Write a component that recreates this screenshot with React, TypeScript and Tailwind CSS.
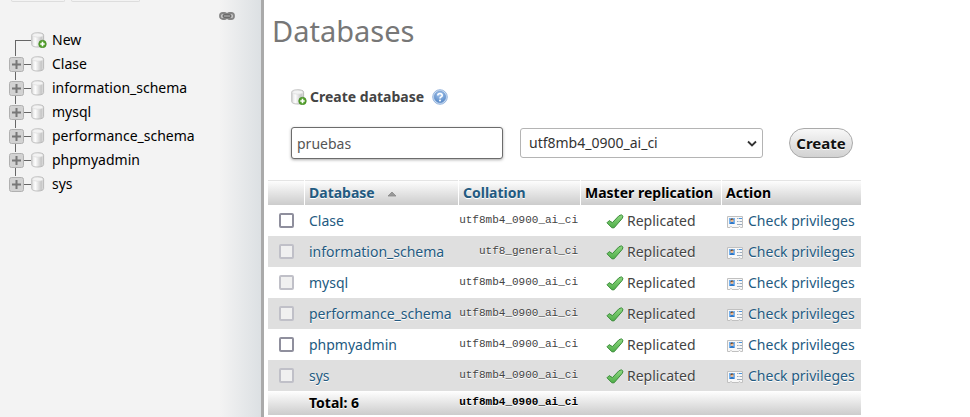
import React from "react";

type Database = {
  name: string;
  collation: string;
  droppable: boolean;
};

const databases: Database[] = [
  { name: "Clase", collation: "utf8mb4_0900_ai_ci", droppable: true },
  { name: "information_schema", collation: "utf8_general_ci", droppable: false },
  { name: "mysql", collation: "utf8mb4_0900_ai_ci", droppable: false },
  { name: "performance_schema", collation: "utf8mb4_0900_ai_ci", droppable: false },
  { name: "phpmyadmin", collation: "utf8mb4_0900_ai_ci", droppable: true },
  { name: "sys", collation: "utf8mb4_0900_ai_ci", droppable: false },
];

function IconDefs() {
  return (
    <svg width="0" height="0" className="absolute" aria-hidden="true">
      <defs>
        <linearGradient id="cylinder" x1="0" x2="1" y1="0" y2="0">
          <stop offset="0" stopColor="#dedede" />
          <stop offset="0.3" stopColor="#fdfdfd" />
          <stop offset="0.55" stopColor="#e2e2e2" />
          <stop offset="0.8" stopColor="#c6c6c6" />
          <stop offset="1" stopColor="#e4e4e4" />
        </linearGradient>
        <linearGradient id="check" x1="0" x2="0" y1="0" y2="1">
          <stop offset="0" stopColor="#8fd882" />
          <stop offset="1" stopColor="#4fae48" />
        </linearGradient>
        <radialGradient id="help" cx="0.5" cy="0.25" r="0.8">
          <stop offset="0" stopColor="#a9c8ee" />
          <stop offset="1" stopColor="#4f83c4" />
        </radialGradient>
      </defs>
    </svg>
  );
}

function DatabaseIcon({ add = false }: { add?: boolean }) {
  return (
    <svg width="16" height="16" viewBox="0 0 16 16" className="shrink-0" aria-hidden="true">
      <path
        d="M.8 3.200C.8 1.600 3.400 .8 6.800 .8s5.800 .8 5.800 2.400v9.400c0 1.600-2.400 2.400-5.800 2.400S.8 14.200 .8 12.600z"
        fill="url(#cylinder)"
        stroke="#b4b4b4"
        strokeWidth="0.9"
      />
      <ellipse cx="6.750" cy="3.200" rx="5.200" ry="2" fill="#f3f3f3" stroke="#d2d2d2" strokeWidth="0.5" />
      {add && (
        <g>
          <circle cx="11.500" cy="12" r="3.800" fill="#54a02c" stroke="#3e8420" strokeWidth="0.6" />
          <path d="M11.500 9.800v4.400M9.300 12h4.400" stroke="#fff" strokeWidth="1.600" />
        </g>
      )}
    </svg>
  );
}

function ExpandIcon() {
  return (
    <svg width="15" height="16" viewBox="0 0 15 16" className="block" aria-hidden="true">
      <rect x="0.5" y="1.500" width="14" height="14" rx="2" fill="#d2d2d2" stroke="#b0b0b0" />
      <path d="M7.500 4v9M3 8.500h9" stroke="#777" strokeWidth="2" />
    </svg>
  );
}

function LinkIcon() {
  return (
    <svg width="16" height="16" viewBox="0 0 16 16" className="block" aria-hidden="true">
      <rect x="1" y="5" width="7" height="6" rx="2.800" fill="#c8c8c8" stroke="#858585" strokeWidth="1.800" />
      <rect x="8" y="5" width="7" height="6" rx="2.800" fill="#c8c8c8" stroke="#858585" strokeWidth="1.800" />
      <rect x="3.500" y="6" width="9" height="4" rx="2" fill="#6a6a6a" />
      <path d="M5 8h6" stroke="#bbb" strokeWidth="1" />
    </svg>
  );
}

function HelpIcon() {
  return (
    <svg width="16" height="16" viewBox="0 0 16 16" className="block" aria-hidden="true">
      <circle cx="8" cy="8" r="7.300" fill="#c9dbf1" stroke="#8eb0db" strokeWidth="0.900" />
      <circle cx="8" cy="8" r="5.700" fill="url(#help)" stroke="#5a89c4" strokeWidth="0.500" />
      <path d="M5.800 6.500C5.800 3.900 10.200 3.900 10.200 6.400c0 1.600-2.200 1.500-2.200 3.200" fill="none" stroke="#fff" strokeWidth="1.600" />
      <circle cx="8" cy="11.500" r="1" fill="#fff" />
    </svg>
  );
}

function CheckIcon() {
  return (
    <svg width="18" height="16" viewBox="0 0 18 16" className="shrink-0" aria-hidden="true">
      <path
        d="M1 9.800 3.200 7.600 6.400 9.600 12.800 2.900 15.300 1.800 17 3.200 16.300 5.300 8.100 14.800 5.900 14.800z"
        fill="url(#check)"
        stroke="#398b38"
        strokeWidth="1"
        strokeLinejoin="round"
      />
    </svg>
  );
}

function PrivilegesIcon() {
  return (
    <svg width="18" height="16" viewBox="0 0 18 16" className="shrink-0" aria-hidden="true">
      <path d="M1.500 3.500h15v11h-2l-1-1.200-1 1.200h-6.500l-1-1.200-1 1.200h-2.500z" fill="#f8f8f8" stroke="#c0c0c0" strokeWidth="1" />
      <rect x="3" y="5" width="6" height="6" fill="#76b2ee" />
      <path d="M3.800 11c0-2.600 4.400-2.600 4.400 0z" fill="#2e76c6" />
      <circle cx="6" cy="7.600" r="1.500" fill="#efb98d" />
      <path d="M4.400 7.400c0-2.600 3.200-2.600 3.200 0l-1-.8z" fill="#704624" />
      <path d="M11 5.500h1.500M11 8.500h1.500M13.500 8.500h2.500M11 11.500h5" stroke="#9aabbd" strokeWidth="1" />
      <path d="M13 5.500h3" stroke="#4b94dc" strokeWidth="1" />
    </svg>
  );
}

function Sidebar() {
  return (
    <nav className="w-[264px] shrink-0 border-r-[3px] border-[#aaa] bg-[linear-gradient(to_right,#f3f3f3_220px,#dce0e3_261px)] text-black">
      <div className="flex h-[2px] gap-[6px] pl-[11px]">
        <div className="w-[54px] rounded-b-[3px] border-x border-b border-[#ddd]" />
        <div className="w-[69px] rounded-b-[3px] border-x border-b border-[#ddd]" />
      </div>
      <div className="flex h-[26px] items-center justify-end pr-[26px] pt-[2px]">
        <button aria-label="Unlink from main panel">
          <LinkIcon />
        </button>
      </div>
      <ul className="pl-[9px]">
        <li className="flex h-6 items-center">
          <span className="ml-[6px] h-3 w-4 self-end border-l border-t border-[#666]" />
          <DatabaseIcon add />
          <a href="#new" className="ml-[5px]">
            New
          </a>
        </li>
        {databases.map((db, i) => (
          <li key={db.name} className="flex h-6 items-center">
            <div className="flex w-[15px] flex-col items-start self-stretch">
              <span className="ml-[6px] h-1 w-px bg-[#666]" />
              <button aria-label={`Expand ${db.name}`}>
                <ExpandIcon />
              </button>
              {i < databases.length - 1 && <span className="ml-[6px] w-px grow bg-[#666]" />}
            </div>
            <span className="h-px w-[7px] bg-[#666]" />
            <DatabaseIcon />
            <a href={`#${db.name}`} className="ml-[5px]">
              {db.name}
            </a>
          </li>
        ))}
      </ul>
    </nav>
  );
}

function CreateForm() {
  return (
    <form className="pl-[23px]" onSubmit={(e) => e.preventDefault()}>
      <div className="flex h-6 items-center">
        <DatabaseIcon add />
        <label htmlFor="new-db" className="ml-[3px] font-bold">
          Create database
        </label>
        <a href="#help" aria-label="Documentation" className="ml-2">
          <HelpIcon />
        </a>
      </div>
      <div className="mt-[18px] flex items-center">
        <input
          id="new-db"
          type="text"
          defaultValue="pruebas"
          className="h-8 w-[212px] rounded-[3px] border border-[#6c6c6c] bg-white px-[5px] text-[#555] shadow-[0_1px_3px_#aaa] outline-none"
        />
        <div className="relative ml-[17px]">
          <select
            aria-label="Collation"
            className="block h-[30px] w-[243px] appearance-none rounded-[3px] border border-[#b4b4b4] bg-white px-2 text-[#333]"
          >
            <option>utf8mb4_0900_ai_ci</option>
            <option>utf8_general_ci</option>
          </select>
          <svg width="10" height="8" viewBox="0 0 10 8" className="pointer-events-none absolute right-[6px] top-[12px]" aria-hidden="true">
            <path d="M1 1.500 5 5.500 9 1.500" fill="none" stroke="#333" strokeWidth="1.800" />
          </svg>
        </div>
        <button className="ml-[26px] h-[30px] w-16 rounded-[15px] border border-[#aaa] bg-linear-to-b from-[#f8f8f8] to-[#d2d2d2] text-[15px] font-bold text-[#111] [text-shadow:0_1px_0_#fff]">
          Create
        </button>
      </div>
    </form>
  );
}

function DatabaseTable() {
  return (
    <table className="w-[593px] table-fixed border-separate border-spacing-0 text-left [text-shadow:0_1px_0_#fff]">
      <colgroup>
        <col className="w-[37px]" />
        <col className="w-[154px]" />
        <col className="w-[122px]" />
        <col className="w-[141px]" />
        <col className="w-[139px]" />
      </colgroup>
      <thead>
        <tr className="h-[25px] bg-linear-to-b from-white to-[#ccc] text-black shadow-[inset_0_1px_0_#e4e4e4] *:border-white *:p-0 *:pl-1 *:[&:not(:last-child)]:border-r">
          <td />
          <th>
            <a href="#sort-name" className="inline-flex items-center gap-3 text-[#235a81]">
              Database
              <svg width="10" height="8" viewBox="0 0 10 8" aria-hidden="true">
                <path d="M5 3 9 7H1z" fill="#999" stroke="#888" strokeWidth="0.800" />
              </svg>
            </a>
          </th>
          <th>
            <a href="#sort-collation" className="text-[#235a81]">
              Collation
            </a>
          </th>
          <th className="whitespace-nowrap">Master replication</th>
          <th>Action</th>
        </tr>
      </thead>
      <tbody>
        {databases.map((db) => (
          <tr key={db.name} className="h-[31px] even:bg-[#dfdfdf] *:p-0">
            <td>
              <input
                type="checkbox"
                aria-label={`Select ${db.name}`}
                disabled={!db.droppable}
                className="ml-[11px] block size-[15px] appearance-none rounded-[2px] border-2 border-[#8f8f9d] bg-white disabled:border-[#c0c0c8] disabled:bg-[#f0f0f0]"
              />
            </td>
            <td>
              <a href={`#db-${db.name}`} className="pl-1 text-[#235a81]">
                {db.name}
              </a>
            </td>
            <td className="text-right font-['Liberation_Mono',monospace] text-[11px]">
              <span className="block pb-[2px] pr-[3px]">{db.collation}</span>
            </td>
            <td>
              <span className="flex items-center gap-[3px] pl-[25px]">
                <CheckIcon />
                Replicated
              </span>
            </td>
            <td>
              <a href={`#privileges-${db.name}`} className="flex items-center gap-1 whitespace-nowrap pl-1 text-[#235a81]">
                <PrivilegesIcon />
                Check privileges
              </a>
            </td>
          </tr>
        ))}
      </tbody>
      <tfoot>
        <tr className="h-6 bg-linear-to-b from-white to-[#ccc] font-bold text-black *:p-0">
          <td />
          <td>
            <span className="pl-1">Total: 6</span>
          </td>
          <td className="text-right font-['Liberation_Mono',monospace] text-[11px]">
            <span className="block pb-[2px] pr-[3px]">utf8mb4_0900_ai_ci</span>
          </td>
          <td />
          <td />
        </tr>
      </tfoot>
    </table>
  );
}

export default function App() {
  return (
    <div className="flex min-h-screen bg-white font-['Noto_Sans',sans-serif] text-[14px] leading-5 text-[#444]">
      <IconDefs />
      <Sidebar />
      <main className="min-w-0 grow pl-1">
        <h1 className="pb-[34px] pl-1 pt-[11px] text-[29px] leading-10 text-[#777]">Databases</h1>
        <CreateForm />
        <div className="mt-[21px]">
          <DatabaseTable />
        </div>
      </main>
    </div>
  );
}
